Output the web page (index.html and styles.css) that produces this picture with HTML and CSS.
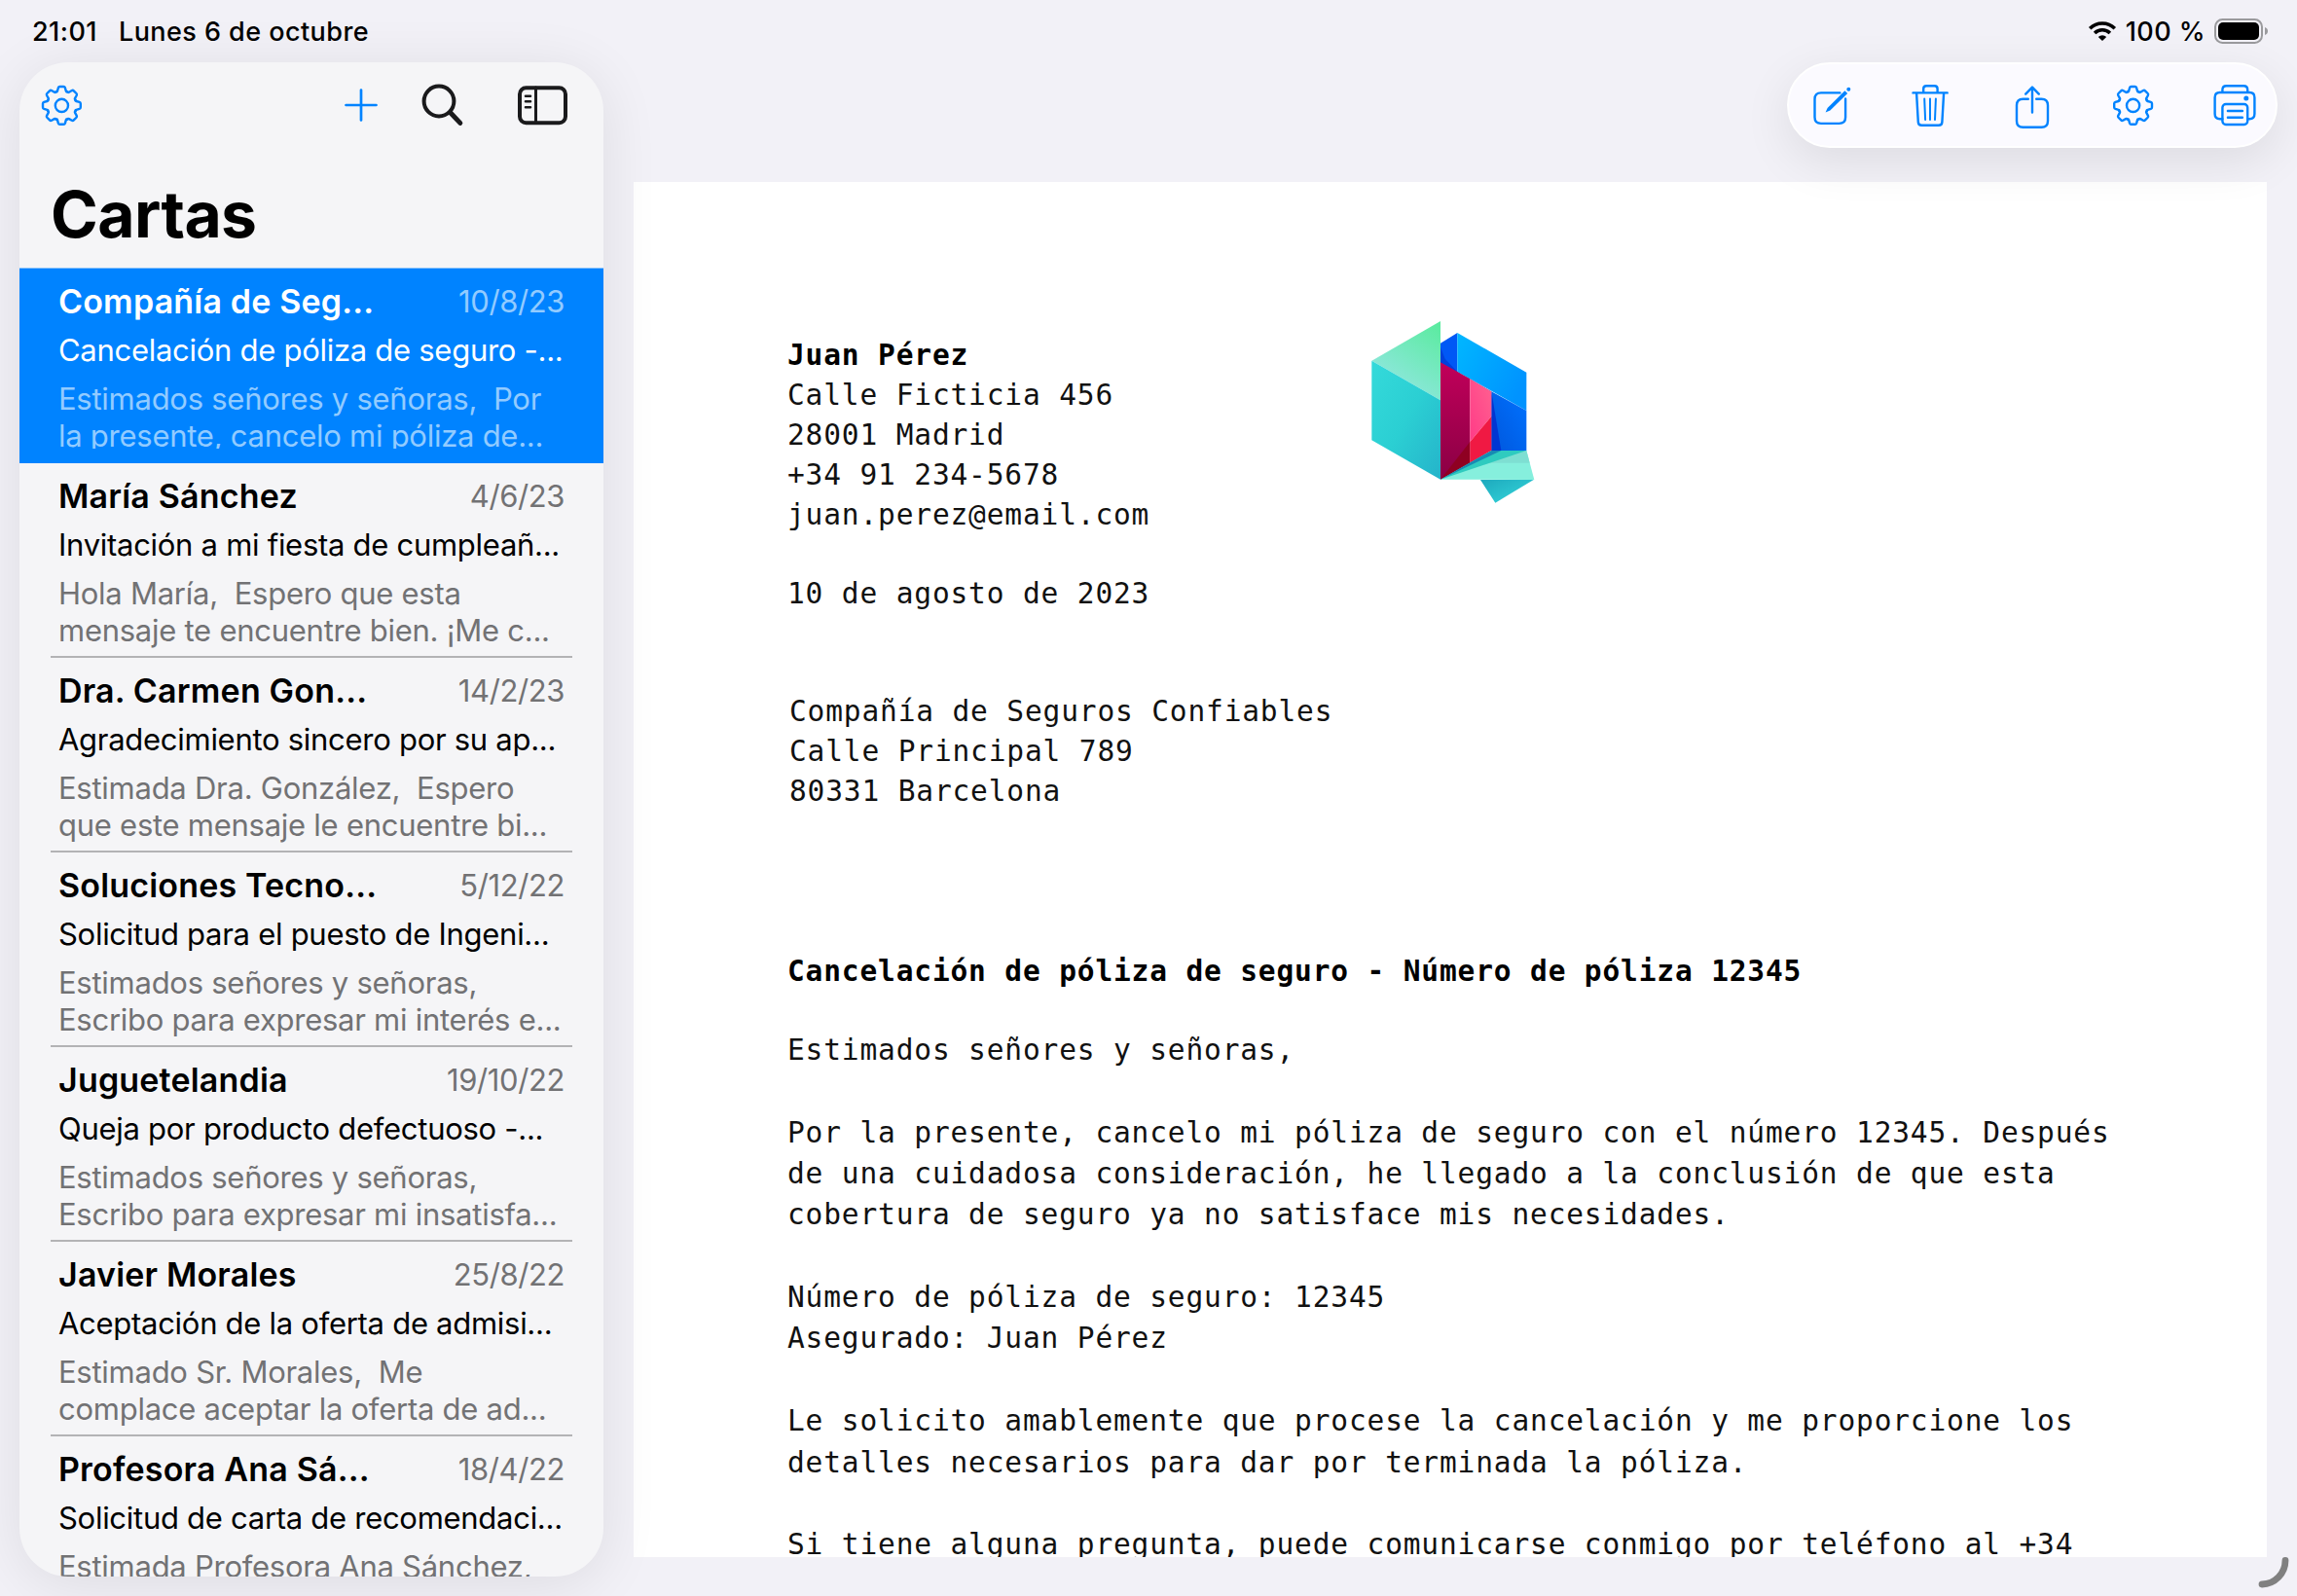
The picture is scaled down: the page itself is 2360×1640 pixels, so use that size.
FILE: index.html
```html
<!DOCTYPE html>
<html lang="es">
<head>
<meta charset="utf-8">
<title>Cartas</title>
<link rel="stylesheet" href="styles.css">
</head>
<body>
<svg class="defs" aria-hidden="true">
  <defs>
    <path id="tooth" d="M-5.85-14.1C-5-13.8-4.6-14.3-4.4-15L-3.5-18.2Q-3.1-19.4-1.9-19.4H1.9Q3.1-19.4 3.5-18.2L4.4-15C4.6-14.3 5-13.8 5.85-14.1"/>
    <symbol id="gear" viewBox="-24 -24 48 48">
      <use href="#tooth"/><use href="#tooth" transform="rotate(45)"/><use href="#tooth" transform="rotate(90)"/><use href="#tooth" transform="rotate(135)"/>
      <use href="#tooth" transform="rotate(180)"/><use href="#tooth" transform="rotate(225)"/><use href="#tooth" transform="rotate(270)"/><use href="#tooth" transform="rotate(315)"/>
      <circle r="6.6"/>
    </symbol>
  </defs>
</svg>
<div class="screen">
  <header class="status">
    <span class="time">21:01</span>
    <span class="date">Lunes 6 de octubre</span>
    <svg class="wifi" viewBox="0 0 30 22"><path d="M2.2 8.2a18.3 18.3 0 0 1 25.6 0M7.1 13a11.4 11.4 0 0 1 15.8 0" fill="none" stroke="#000" stroke-width="3.6"/><path d="M15 21l-4.2-4.1a6 6 0 0 1 8.4 0z"/></svg>
    <span class="percent">100 %</span>
    <svg class="battery" viewBox="0 0 56 26"><rect x="1" y="1" width="48" height="24" rx="7.5" fill="none" stroke="#9a9a9d" stroke-width="2"/><rect x="4" y="4" width="42" height="18" rx="5"/><path d="M52 9q3 1.2 3 4t-3 4z" fill="#9a9a9d"/></svg>
  </header>
  <main class="main">
    <aside class="sidebar">
      <nav class="side-tools">
        <svg class="icon blue" viewBox="-24 -24 48 48"><use href="#gear" x="-23.6" y="-23.6" width="48" height="48"/></svg>
        <svg class="icon blue push" viewBox="0 0 48 48"><path d="M24 8.5v31M8.5 24h31" stroke-width="2.7"/></svg>
        <svg class="icon dark search" viewBox="0 0 48 48"><circle cx="20" cy="20" r="15.4" stroke-width="4"/><path d="M31.5 31.5L41.8 42.4" stroke-width="5"/></svg>
        <svg class="icon dark panel" viewBox="0 0 56 48"><rect x="4" y="6.2" width="47" height="36" rx="6.5" stroke-width="4"/><path d="M20.5 6v36" stroke-width="3"/><path d="M10 14.7h5M10 20.3h5M10 26.2h5" stroke-width="2.6"/></svg>
      </nav>
      <h1 class="title">Cartas</h1>
      <ul class="letters">
        <li class="letter selected"><div class="top"><b class="name">Compañía de Seg...</b><span class="day">10/8/23</span></div><p class="subject">Cancelación de póliza de seguro -...</p><p class="preview">Estimados señores y señoras,&nbsp; Por<br>la presente, cancelo mi póliza de...</p></li>
        <li class="letter"><div class="top"><b class="name">María Sánchez</b><span class="day">4/6/23</span></div><p class="subject">Invitación a mi fiesta de cumpleañ...</p><p class="preview">Hola María,&nbsp; Espero que esta<br>mensaje te encuentre bien. ¡Me c...</p></li>
        <li class="letter"><div class="top"><b class="name">Dra. Carmen Gon...</b><span class="day">14/2/23</span></div><p class="subject">Agradecimiento sincero por su ap...</p><p class="preview">Estimada Dra. González,&nbsp; Espero<br>que este mensaje le encuentre bi...</p></li>
        <li class="letter"><div class="top"><b class="name">Soluciones Tecno...</b><span class="day">5/12/22</span></div><p class="subject">Solicitud para el puesto de Ingeni...</p><p class="preview">Estimados señores y señoras,<br>Escribo para expresar mi interés e...</p></li>
        <li class="letter"><div class="top"><b class="name">Juguetelandia</b><span class="day">19/10/22</span></div><p class="subject">Queja por producto defectuoso -...</p><p class="preview">Estimados señores y señoras,<br>Escribo para expresar mi insatisfa...</p></li>
        <li class="letter"><div class="top"><b class="name">Javier Morales</b><span class="day">25/8/22</span></div><p class="subject">Aceptación de la oferta de admisi...</p><p class="preview">Estimado Sr. Morales,&nbsp; Me<br>complace aceptar la oferta de ad...</p></li>
        <li class="letter"><div class="top"><b class="name">Profesora Ana Sá...</b><span class="day">18/4/22</span></div><p class="subject">Solicitud de carta de recomendaci...</p><p class="preview">Estimada Profesora Ana Sánchez,</p></li>
      </ul>
    </aside>
    <section class="content">
      <nav class="toolbar">
        <svg class="icon blue" viewBox="1857 84 48 48"><path d="M1890.4 95.4H1871q-6.5 0-6.5 6.5v18.6q0 6.4 6.5 6.4h18.6q6.5 0 6.5-6.4V101.5"/><path class="solid" d="M1875.6 115.6l2-4.6L1895.4 93.200l2.800 2.800L1880.300 113.600z"/><circle class="solid" cx="1899.300" cy="91.700" r="2"/></svg>
        <svg class="icon blue" viewBox="1960.500 84 48 48"><path d="M1966 95.400h35.200M1976.700 95v-3.800q0-3 3-3h8.400q3 0 3 3V95M1969.600 95.800l1.700 29.600q.2 3.400 3.600 3.400h17.400q3.400 0 3.600-3.400l1.700-29.600"/><path d="M1977.700 101.500l.9 21.500M1983.500 101.500V123M1989.400 101.500l-.9 21.500" stroke-width="2"/></svg>
        <svg class="icon blue" viewBox="2064 84 48 48"><path d="M2083.800 101.700h-5.300q-6.500 0-6.500 6.500v16q0 6.500 6.500 6.500h19q6.500 0 6.500-6.500v-16q0-6.500-6.500-6.500h-5.300M2088 115.500V90M2081.200 96.600l6.800-7 6.800 7"/></svg>
        <svg class="icon blue" viewBox="-24 -24 48 48"><use href="#gear" x="-24.4" y="-23.6" width="48" height="48"/></svg>
        <svg class="icon blue" viewBox="2271.400 84 48 48"><path d="M2282.800 122.200h-2.600q-5.200 0-5.200-5.200v-16.800q0-5.200 5.200-5.200h30.400q5.200 0 5.200 5.200V117q0 5.200-5.200 5.200h-2M2282.800 94.500v-2.200q0-4 4-4h17.800q4 0 4 4v2.200"/><rect x="2282.800" y="107" width="25.800" height="21" rx="3.500"/><path d="M2288.300 114h15M2288.300 120.700h15"/><circle class="solid" cx="2307.200" cy="101" r="2.500"/></svg>
      </nav>
      <article class="paper">
        <div class="letterhead">
          <address class="sender"><b>Juan Pérez</b>
Calle Ficticia 456
28001 Madrid
+34 91 234-5678
juan.perez@email.com

10 de agosto de 2023</address>
          <svg class="logo" viewBox="0 0 660 660">
            <defs>
              <linearGradient id="g1" x1=".9" y1="0" x2=".3" y2="1"><stop offset="0" stop-color="#5beba0"/><stop offset="1" stop-color="#96e6e6"/></linearGradient>
              <linearGradient id="g2" x1="0" y1="0" x2="1" y2="1"><stop offset="0" stop-color="#34dada"/><stop offset=".5" stop-color="#2bcfd3"/><stop offset="1" stop-color="#25b3ca"/></linearGradient>
              <linearGradient id="g3" x1="0" y1="0" x2="1" y2=".6"><stop offset="0" stop-color="#00b7ff"/><stop offset="1" stop-color="#0093ff"/></linearGradient>
              <linearGradient id="g4" x1="0" y1="0" x2="0" y2="1"><stop offset="0" stop-color="#c1005a"/><stop offset="1" stop-color="#8a0044"/></linearGradient>
              <linearGradient id="g5" x1="0" y1="1" x2="1" y2="0"><stop offset="0" stop-color="#ff3b87"/><stop offset="1" stop-color="#ff6190"/></linearGradient>
              <linearGradient id="g6" x1="0" y1="0" x2="1" y2="1"><stop offset="0" stop-color="#1da9bd"/><stop offset="1" stop-color="#36d8dc"/></linearGradient>
              <linearGradient id="g7" x1="1" y1="0" x2="0" y2="1"><stop offset="0" stop-color="#0072ff"/><stop offset="1" stop-color="#0057dd"/></linearGradient>
            </defs>
            <path fill="#0058f5" d="M300 128l52-32v125l-52-33z"/>
            <path fill="#0041dc" d="M300 140l14 36 38 40 40 28-92-56z"/>
            <path fill="url(#g3)" d="M352 96l213 122v118L352 216z"/>
            <path fill="#0068d5" d="M340 208l12 8 105 61v4z"/>
            <path fill="url(#g7)" d="M457 277l108 59v123H457z"/>
            <path fill="#0036d2" d="M457 277l30 182h-30z"/>
            <path fill="url(#g4)" d="M300 187l91 51v259l-91 51z"/>
            <path fill="#8f0022" d="M391 432v65l-91 51z"/>
            <path fill="url(#g5)" d="M391 238l66 39v76l-66 79z"/>
            <path fill="#f01943" d="M457 353v106l-66 38v-65z"/>
            <path fill="#86efdd" d="M300 548l157-70 108-19 24 90z"/>
            <path fill="#7edfd2" d="M420 497l145-38 10 38z"/>
            <path fill="#2fcbbf" d="M300 548l157-89h108z"/>
            <path fill="#178bb3" d="M300 548l157-89h30z"/>
            <path fill="url(#g6)" d="M423 549h164l-118 71z"/>
            <path fill="url(#g1)" d="M88 182L300 60v244z"/>
            <path fill="url(#g2)" d="M88 182l212 122v244L88 427z"/>
          </svg>
        </div>
        <address class="recipient">Compañía de Seguros Confiables
Calle Principal 789
80331 Barcelona</address>
        <h2 class="re">Cancelación de póliza de seguro - Número de póliza 12345</h2>
        <div class="body">Estimados señores y señoras,

Por la presente, cancelo mi póliza de seguro con el número 12345. Después
de una cuidadosa consideración, he llegado a la conclusión de que esta
cobertura de seguro ya no satisface mis necesidades.

Número de póliza de seguro: 12345
Asegurado: Juan Pérez

Le solicito amablemente que procese la cancelación y me proporcione los
detalles necesarios para dar por terminada la póliza.

Si tiene alguna pregunta, puede comunicarse conmigo por teléfono al +34</div>
      </article>
    </section>
  </main>
  <svg class="corner" viewBox="0 0 40 40"><path d="M28 7.5A24.500 24.500 0 0 1 4 32" fill="none" stroke="#808080" stroke-width="6.800" stroke-linecap="round"/></svg>
</div>
</body>
</html>
```
FILE: styles.css
```css
* { box-sizing: border-box; margin: 0; padding: 0; }
body { background: #f2f1f7; color: #000; font-family: Inter, "Liberation Sans", sans-serif; }
.defs { position: absolute; width: 0; height: 0; }
.screen { position: relative; width: 2360px; height: 1640px; overflow: hidden; display: flex; flex-direction: column; }

.status { height: 64px; display: flex; align-items: center; padding: 0 29px 0 33px; font-size: 27px; font-weight: 500; letter-spacing: .45px; line-height: 65px; white-space: nowrap; }
.time { margin-right: 22px; }
.wifi { width: 30px; height: 22px; margin-left: auto; }
.percent { margin: 0 9px 0 9px; }
.battery { width: 56px; height: 26px; }

.main { flex: 1; min-height: 0; display: flex; }
.sidebar { position: relative; z-index: 1; width: 600px; height: 1556px; margin-left: 20px; overflow: hidden; border-radius: 50px; background: #f5f5f7; box-shadow: 0 8px 60px rgba(0, 0, 0, .09); flex: none; }
.side-tools { display: flex; align-items: center; height: 68px; padding: 20px 34px 0 19px; }
.icon { width: 48px; height: 48px; flex: none; fill: none; stroke-width: 2.4; stroke-linecap: round; stroke-linejoin: round; overflow: visible; }
.blue { stroke: #0083ff; }
.dark { stroke: #1a1a1c; }
.solid { fill: #0083ff; stroke: none; }
.push { margin-left: auto; }
.search { margin-left: 36px; }
.panel { width: 56px; margin-left: 51px; }
.title { margin: 48px 0 16px 32px; font-size: 66px; font-weight: 700; letter-spacing: -.6px; line-height: 80px; }

.letters { list-style: none; }
.letter { position: relative; height: 200px; padding: 14px 40px 0; font-size: 31px; white-space: nowrap; }
.letter::after { content: ""; position: absolute; left: 32px; right: 32px; bottom: 0; height: 2px; background: #b3b3b5; }
.top { display: flex; justify-content: space-between; line-height: 40px; margin-bottom: 10px; }
.name { font-size: 34px; font-weight: 600; letter-spacing: .18px; }
.day { color: #727274; letter-spacing: -.4px; }
.subject { line-height: 40px; margin-bottom: 11px; letter-spacing: -.28px; }
.preview { line-height: 38px; color: #727274; letter-spacing: -.26px; }
.selected { background: #0083ff; color: #fff; box-shadow: 0 -1px 0 #8cc3fb; }
.selected::after { display: none; }
.selected .day, .selected .preview { color: #92cbff; }
.selected .preview { height: 70px; overflow: hidden; }

.content { flex: 1; display: flex; flex-direction: column; padding: 0 20px 0 31px; }
.toolbar { position: relative; z-index: 1; align-self: flex-end; display: flex; align-items: center; justify-content: space-between; width: 504px; height: 88px; padding: 0 18.5px; border: 2px solid #fff; border-radius: 44px; background: #fbfaff; box-shadow: 0 14px 50px rgba(0, 0, 0, .09); }
.paper { width: 1678px; height: 1413px; margin-top: 35px; padding: 123px 0 0 158px; overflow: hidden; background: #fff; font-family: "DejaVu Sans Mono", "Liberation Mono", monospace; font-size: 29.5px; letter-spacing: .85px; line-height: 40.8px; color: #111; }
address { font-style: normal; }
.letterhead { display: flex; height: 321px; }
.sender { width: 571px; padding-top: 35.4px; white-space: pre; }
.logo { width: 220px; height: 220px; }
.recipient { margin: 80px 0 144.2px 2px; white-space: pre; }
.re { font-size: inherit; font-weight: 700; color: #000; }
.sender b { color: #000; }
.body { margin-top: 39.7px; line-height: 42.35px; white-space: pre; }
.corner { position: absolute; left: 2320px; top: 1596px; width: 40px; height: 40px; }
```
